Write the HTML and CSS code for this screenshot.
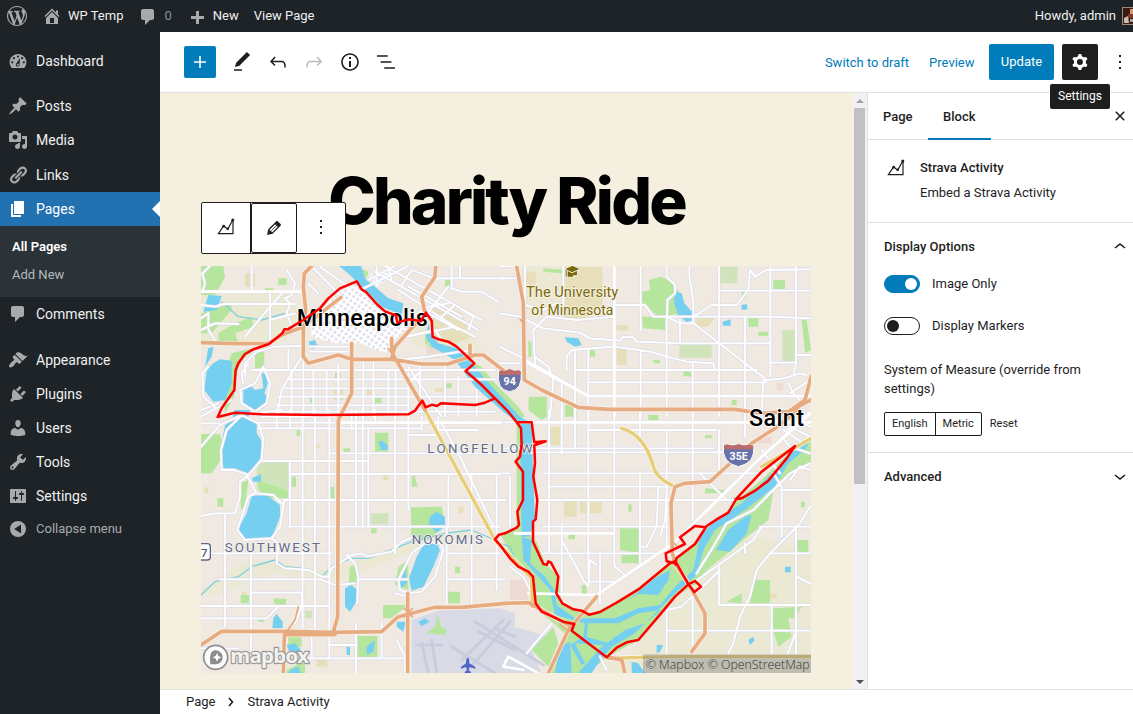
FILE: index.html
```html
<!DOCTYPE html>
<html lang="en">
<head>
<meta charset="utf-8">
<title>Edit Page</title>
<link rel="stylesheet" href="styles.css">
</head>
<body>
<header class="adminbar">
  <svg class="ab-logo" viewBox="0 0 20 20"><path d="M20 10c0-5.51-4.49-10-10-10C4.48 0 0 4.49 0 10c0 5.52 4.48 10 10 10 5.51 0 10-4.48 10-10zM7.78 15.37L4.37 6.22c.55-.02 1.17-.08 1.17-.08.5-.06.44-1.13-.06-1.11 0 0-1.45.11-2.37.11-.18 0-.37 0-.58-.01C4.12 2.69 6.87 1.11 10 1.11c2.33 0 4.45.87 6.05 2.34-.68-.11-1.65.39-1.65 1.58 0 .74.45 1.36.9 2.1.35.61.55 1.36.55 2.46 0 1.49-1.4 5-1.4 5l-3.03-8.37c.54-.02.82-.17.82-.17.5-.05.44-1.25-.06-1.22 0 0-1.44.12-2.38.12-.87 0-2.33-.12-2.33-.12-.5-.03-.56 1.2-.06 1.22l.92.08 1.26 3.41zM17.41 10c.24-.64.74-1.87.43-4.25.7 1.29 1.05 2.71 1.05 4.25 0 3.29-1.73 6.24-4.4 7.78.97-2.59 1.94-5.2 2.92-7.78zM6.1 18.09C3.12 16.65 1.11 13.53 1.11 10c0-1.3.23-2.48.72-3.59C3.25 10.3 4.67 14.2 6.1 18.09zm4.03-6.63l2.58 6.98c-.86.29-1.76.45-2.71.45-.79 0-1.57-.11-2.29-.33.81-2.38 1.62-4.74 2.42-7.1z"/></svg>
  <span class="ab-item ab-site"><svg viewBox="0 0 20 20"><path fill-rule="evenodd" d="M16 8.5l1.53 1.53-1.06 1.06L10 4.6l-6.47 6.47-1.06-1.06L10 2.500l4 4v-2h2v4zm-6-2.460l6 5.990V18H4v-5.970zM12 17v-5H8v5h4z"/></svg>WP Temp</span>
  <span class="ab-item ab-comments"><svg viewBox="0 0 20 20"><path d="M5 2h9c1.100 0 2 .9 2 2v7c0 1.100-.9 2-2 2h-2l-5 5v-5H5c-1.100 0-2-.9-2-2V4c0-1.100.9-2 2-2z"/></svg><i>0</i></span>
  <span class="ab-item ab-new"><svg viewBox="0 0 20 20"><path d="M17 9v3h-5v5H9v-5H4V9h5V4h3v5z"/></svg>New</span>
  <span class="ab-item">View Page</span>
  <span class="ab-user">Howdy, admin</span>
  <svg class="avatar" viewBox="0 0 18 18"><rect width="18" height="18" fill="#9a8c80"/><rect x="1" y="1" width="16" height="16" fill="#3a1a12"/><path d="M8 2h4v5H8z" fill="#d69a75"/><path d="M6 7h5v4H6z" fill="#7c3c28"/><path d="M2 11l4-2 1 7H2z" fill="#c9beb4"/><path d="M8 12h5v3H8z" fill="#a9a09b"/></svg>
</header>

<div class="shell">
  <nav class="menu">
    <a class="item"><svg viewBox="0 0 20 20"><path d="M3.760 17h12.480c1.340-1.530 2.170-3.520 2.170-5.720C18.410 6.600 14.650 3 10 3s-8.410 3.600-8.410 8.280c0 2.200.83 4.190 2.170 5.720z"/><g class="hole"><circle cx="10" cy="5.500" r="1.100"/><circle cx="5.900" cy="7.200" r="1.100"/><circle cx="14.100" cy="7.200" r="1.100"/><circle cx="4.200" cy="11.300" r="1.100"/><circle cx="15.800" cy="11.300" r="1.100"/><path d="M12 7l-.5 6.500c0 2.800-3.700 2.800-3.700.2 0-1 .6-1.500 1-2z"/></g><circle cx="9.800" cy="13.700" r="1"/></svg>Dashboard</a>
    <div class="sep"></div>
    <a class="item"><svg viewBox="0 0 20 20"><path d="M10.440 3.020l1.820-1.820 6.360 6.350-1.830 1.820c-1.050-.68-2.480-.57-3.410.36l-.75.75c-.92.93-1.040 2.350-.35 3.410l-1.830 1.820-2.410-2.410-2.800 2.790c-.42.42-3.380 2.710-3.800 2.290s1.860-3.390 2.280-3.810l2.790-2.790L4.100 9.360l1.830-1.820c1.050.69 2.480.57 3.400-.36l.75-.75c.93-.92 1.050-2.350.36-3.410z"/></svg>Posts</a>
    <a class="item"><svg viewBox="0 0 20 20"><path fill-rule="evenodd" d="M13 11V4c0-.55-.45-1-1-1h-1.670L9 1H5L3.670 3H2c-.55 0-1 .45-1 1v7c0 .55.45 1 1 1h10c.55 0 1-.45 1-1zM7 4.500c1.380 0 2.500 1.120 2.500 2.500S8.380 9.500 7 9.500 4.500 8.380 4.500 7 5.620 4.500 7 4.500zM14 6h5v10.500c0 1.380-1.120 2.500-2.500 2.500S14 17.880 14 16.500s1.120-2.500 2.500-2.500c.17 0 .34.02.5.05V9h-3V6zm-4 8.050V13h2v3.500c0 1.380-1.120 2.500-2.500 2.500S7 17.880 7 16.500 8.120 14 9.500 14c.17 0 .34.02.5.05z"/></svg>Media</a>
    <a class="item"><svg viewBox="0 0 20 20"><path d="M17.740 2.760c1.680 1.690 1.680 4.410 0 6.100l-1.530 1.520c-1.120 1.120-2.700 1.470-4.140 1.090l2.620-2.610.76-.77.76-.76c.84-.84.84-2.200 0-3.040-.84-.85-2.200-.85-3.040 0l-.77.76-3.380 3.380c-.37-1.440-.02-3.020 1.100-4.140l1.520-1.530c1.690-1.680 4.420-1.680 6.100 0zM8.590 13.430l5.340-5.340c.42-.42.42-1.100 0-1.520-.44-.43-1.130-.39-1.530 0l-5.330 5.340c-.42.42-.42 1.100 0 1.520.44.43 1.130.39 1.520 0zm-.76 2.290l4.140-4.150c.38 1.440.03 3.020-1.090 4.140l-1.520 1.530c-1.690 1.680-4.410 1.680-6.100 0-1.680-1.680-1.680-4.420 0-6.100l1.530-1.520c1.120-1.120 2.700-1.470 4.140-1.100l-4.140 4.150c-.85.84-.85 2.200 0 3.050.84.84 2.200.84 3.040 0z"/></svg>Links</a>
    <a class="item current"><svg viewBox="0 0 20 20"><path d="M6 15V2h10v13H6zm-1 1h8v2H3V5h2v11z"/></svg>Pages</a>
    <div class="submenu"><a class="on">All Pages</a><a>Add New</a></div>
    <a class="item"><svg viewBox="0 0 20 20"><path d="M5 2h9c1.100 0 2 .9 2 2v7c0 1.100-.9 2-2 2h-2l-5 5v-5H5c-1.100 0-2-.9-2-2V4c0-1.100.9-2 2-2z"/></svg>Comments</a>
    <div class="sep wide"></div>
    <a class="item"><svg viewBox="0 0 20 20"><path d="M14.480 11.060L7.410 3.990l1.500-1.500c.5-.56 2.300-.47 3.510.32 1.210.8 1.430 1.280 2.910 2.100 1.180.64 2.450 1.260 4.450.85zm-.71.71L6.700 4.700 4.930 6.470c-.39.39-.39 1.020 0 1.410l1.060 1.060c.39.39.39 1.030 0 1.420-.6.6-1.430 1.110-2.210 1.690-.35.26-.7.53-1.010.84C1.430 14.230.4 16.080 1.400 17.070c.99 1 2.840-.03 4.180-1.360.31-.31.58-.66.85-1.020.57-.78 1.080-1.610 1.690-2.210.39-.39 1.020-.39 1.410 0l1.060 1.060c.39.39 1.020.39 1.410 0z"/></svg>Appearance</a>
    <a class="item"><svg viewBox="0 0 20 20"><path d="M13.110 4.360L9.870 7.600 8 5.730l3.240-3.240c.35-.34 1.050-.2 1.560.32.52.51.66 1.210.31 1.550zm-8 1.770l.91-1.120 9.010 9.010-1.190.84c-.71.71-2.630 1.160-3.820 1.160H6.140L4.900 17.260c-.59.59-1.540.59-2.120 0-.59-.58-.59-1.530 0-2.120l1.240-1.240v-3.880c0-1.130.4-3.190 1.090-3.890zm7.260 3.970l3.240-3.240c.34-.35 1.040-.21 1.550.31.52.51.66 1.210.31 1.550l-3.240 3.250z"/></svg>Plugins</a>
    <a class="item"><svg viewBox="0 0 20 20"><path d="M10 9.250c-2.270 0-2.730-3.440-2.730-3.440C7 4.020 7.820 2 9.970 2c2.160 0 2.980 2.020 2.710 3.810 0 0-.41 3.440-2.680 3.440zm0 2.570L12.720 10c2.390 0 4.520 2.330 4.520 4.530v2.490s-3.650 1.130-7.240 1.130c-3.650 0-7.240-1.130-7.240-1.130v-2.490c0-2.250 1.940-4.480 4.470-4.480z"/></svg>Users</a>
    <a class="item"><svg viewBox="0 0 20 20"><path fill-rule="evenodd" d="M16.680 9.770c-1.340 1.340-3.300 1.670-4.950.99l-5.410 6.520c-.99.99-2.590.99-3.580 0s-.99-2.590 0-3.570l6.520-5.420c-.68-1.650-.35-3.610.99-4.950 1.280-1.280 3.120-1.620 4.720-1.060l-2.890 2.890 2.820 2.820 2.860-2.870c.53 1.580.18 3.390-1.080 4.650zM3.810 16.210c.4.39 1.040.39 1.430 0 .4-.4.4-1.040 0-1.430-.39-.4-1.030-.4-1.430 0-.39.39-.39 1.030 0 1.430z"/></svg>Tools</a>
    <a class="item"><svg viewBox="0 0 20 20"><path fill-rule="evenodd" d="M18 16V4c0-.55-.45-1-1-1H3c-.55 0-1 .45-1 1v12c0 .55.45 1 1 1h14c.55 0 1-.45 1-1zM8 11h1c.55 0 1 .45 1 1s-.45 1-1 1H8v1.500c0 .28-.22.5-.5.5s-.5-.22-.5-.5V13H6c-.55 0-1-.45-1-1s.45-1 1-1h1V5.500c0-.28.22-.5.5-.5s.5.22.5.5V11zm5-2h-1c-.55 0-1-.45-1-1s.45-1 1-1h1V5.500c0-.28.22-.5.5-.5s.5.22.5.5V7h1c.55 0 1 .45 1 1s-.45 1-1 1h-1v5.500c0 .28-.22.5-.5.5s-.5-.22-.5-.5V9z"/></svg>Settings</a>
    <a class="item collapse"><svg viewBox="0 0 20 20"><circle cx="10" cy="10" r="8"/><path class="hole" d="M13 5.500v9L6.200 10z"/></svg>Collapse menu</a>
  </nav>

  <div class="editor">
    <div class="topbar">
      <button class="add"><svg viewBox="0 0 24 24"><path d="M18 11.200h-5.200V6h-1.600v5.200H6v1.600h5.200V18h1.600v-5.200H18z"/></svg></button>
      <svg class="tool" viewBox="0 0 24 24"><path d="M20.100 5.100L16.900 2 6.200 12.700l-1.300 4.400 4.500-1.300L20.100 5.100zM4 20.800h8v-1.500H4v1.500z"/></svg>
      <svg class="tool" viewBox="0 0 24 24"><path d="M18.300 11.700c-.6-.6-1.400-.9-2.300-.9H6.700l2.900-3.300-1.100-1-4.500 5L8.500 16l1-1-2.700-2.700H16c.5 0 .9.2 1.300.5 1 1 1 3.400 1 4.500v.3h1.500v-.2c0-1.500 0-4.300-1.500-5.700z"/></svg>
      <svg class="tool off" viewBox="0 0 24 24"><path d="M15.600 6.500l-1.100 1 2.900 3.300H8c-.9 0-1.700.3-2.300.9-1.400 1.500-1.400 4.200-1.400 5.600v.2h1.500v-.3c0-1.100 0-3.500 1-4.500.3-.3.7-.5 1.300-.5h9.200L14.500 15l1.100 1.100 4.600-4.600-4.600-5z"/></svg>
      <svg class="tool" viewBox="0 0 24 24"><path fill-rule="evenodd" d="M12 3.200c-4.800 0-8.800 3.900-8.800 8.800 0 4.800 3.900 8.800 8.800 8.800 4.800 0 8.800-3.900 8.800-8.800 0-4.800-4-8.800-8.800-8.800zm0 16c-4 0-7.200-3.300-7.200-7.200C4.800 8 8 4.800 12 4.800s7.200 3.300 7.200 7.200c0 4-3.200 7.200-7.200 7.200zM11 17h2v-6h-2v6zm0-8h2V7h-2v2z"/></svg>
      <svg class="tool" viewBox="0 0 24 24"><path d="M13.800 5.200H3v1.500h10.800V5.200zm-3.600 12v1.500H21v-1.500H10.200zm7.200-6H6.600v1.500h10.800v-1.500z"/></svg>
      <div class="actions">
        <a>Switch to draft</a><a>Preview</a>
        <button class="update">Update</button>
        <button class="gear"><svg viewBox="0 0 24 24"><path fill-rule="evenodd" d="M10.289 4.836A1 1 0 0111.275 4h1.306a1 1 0 01.987.836l.244 1.466c.787.26 1.503.679 2.108 1.218l1.393-.522a1 1 0 011.216.437l.653 1.130a1 1 0 01-.23 1.273l-1.148.944a6.025 6.025 0 010 2.435l1.149.946a1 1 0 01.23 1.272l-.653 1.130a1 1 0 01-1.216.437l-1.394-.522c-.605.54-1.320.958-2.108 1.218l-.244 1.466a1 1 0 01-.987.836h-1.306a1 1 0 01-.986-.836l-.244-1.466a5.995 5.995 0 01-2.108-1.218l-1.394.522a1 1 0 01-1.217-.436l-.653-1.131a1 1 0 01.23-1.272l1.149-.946a6.026 6.026 0 010-2.435l-1.148-.944a1 1 0 01-.23-1.272l.653-1.131a1 1 0 011.217-.437l1.393.522a5.994 5.994 0 012.108-1.218l.244-1.466zM14.929 12a3 3 0 11-6 0 3 3 0 016 0z"/></svg><span class="tip">Settings</span></button>
        <svg class="more" viewBox="0 0 24 24"><path d="M13 19h-2v-2h2v2zm0-6h-2v-2h2v2zm0-6h-2V5h2v2z"/></svg>
      </div>
    </div>

    <div class="middle">
      <main class="canvas">
        <h1>Charity Ride</h1>
        <div class="blocktools">
          <span class="bt first"><svg class="strava" viewBox="0 0 20 20"><path d="M17 1.500V15.700H2.400L7.600 7.800L11.700 11.200L17 1.500"/><circle cx="16.800" cy="2" r="1.500"/><circle cx="7.700" cy="8.200" r="1.400"/><circle cx="11.700" cy="10.700" r="1.200"/></svg></span>
          <span class="bt active"><svg viewBox="0 0 20 20"><path fill-rule="evenodd" d="M13.890 3.390l2.710 2.720c.46.46.42 1.240.03 1.640l-8.010 8.020-5.560 1.160 1.160-5.580s7.600-7.630 7.990-8.030c.39-.39 1.220-.39 1.680.07zm-2.730 2.790l-5.590 5.610 1.110 1.110 5.540-5.650zm-2.970 8.230l5.580-5.600-1.070-1.080-5.590 5.600z"/></svg></span>
          <span class="bt last"><svg viewBox="0 0 24 24"><path d="M13 19h-2v-2h2v2zm0-6h-2v-2h2v2zm0-6h-2V5h2v2z"/></svg></span>
        </div>
        <svg class="map" viewBox="18 288 1830 1221">
          <defs>
            <pattern id="blocks" width="15" height="15" patternUnits="userSpaceOnUse" patternTransform="rotate(35)"><rect width="15" height="15" fill="#fff"/><rect x="4" y="4" width="8" height="8" fill="#dcdde8"/></pattern>
            <g id="streets">
              <g>
                <path d="M18 365H320M18 405L60 410L85 402H300M170 288V365M265 365L200 440L150 500M275 300L300 340L290 375L270 385L285 400L275 430L290 470M795 288V325M720 325H930M770 288V355L800 365H860L910 395M18 480L60 460L130 462M40 590L22 610L25 680L60 712M45 288L22 310L30 340L22 365M18 445L40 430V480L60 510M225 370V520M225 450L300 430M150 620L150 580L185 545L240 530L320 528M145 640L140 610L160 580M205 590L225 640L215 700L180 725L140 700L135 660L180 640L205 590M280 540V600M320 560L290 610L260 660L245 740M170 600H320M345 530H460M345 545H460M18 720L70 700M18 740L110 690"/>
                <path d="M280 600H900M280 628H900M270 655H640M250 680H860M245 706H640M245 725H900M290 600V740M325 570V740M355 600V740M395 600V740M430 580V740M505 570V740M535 570V740M580 600V740M602 600V740M640 610V740M675 580V700M750 580V740M790 620V740M845 660V740M640 590L740 740M610 570L700 560L830 540M640 640L680 600"/>
                <path d="M350 290L440 380M375 290L460 350M340 340L370 370M500 358L640 288M540 305L850 480M570 288L860 450M600 470L700 410L760 400M640 500L780 470L840 500M520 330L600 288M545 330L545 290M580 288L590 330M820 480L835 440L780 405L740 440M690 440L760 350M730 330L650 300L620 345M640 350L800 440M610 360L780 470M790 480L700 430M740 510L720 480L630 500"/>
              </g>
              <g transform="translate(915)">
                <path d="M343 288V740M422 288V480M500 288V320L525 345V370L502 390V420L500 440V740M568 288V320L580 395V460M657 288V740M735 440V600M811 288V620M888 288V580L880 620M343 405H435L460 440H811L930 445M657 362H930M500 440L540 460H580L800 630M580 440L635 405H710L745 360L750 300L765 320L800 300L930 298M343 440L230 450L140 440L100 480L105 580M0 430L60 440L130 475L240 488L270 505L360 512L370 500L400 502L410 515L540 520H811M200 600V560L215 540L343 530L450 545L500 560L560 575L640 580L645 600M225 600H770M265 637H800M265 678H930M811 578H885M888 555H930M225 540V740M265 540V740M0 530L60 560L150 610L200 640L265 678M0 325L60 325M75 405L130 420L170 400M105 560L145 590L160 630L150 740M185 640V740M0 580H60M540 450V515M578 580V740M422 545V740M735 600V740M790 630L785 740M790 632L850 625L900 610L920 615M865 640L880 670L910 700M870 670L930 630M0 288L40 288M190 288V405M75 288V500"/>
              </g>
              <g transform="translate(0 720)">
                <path d="M18 40H75M190 38H420M190 55H680M200 20H420M440 38H915M205 153H520M405 130H915M285 192H915M265 270H930M280 350H860M20 430H410M760 430H915M75 508H380M490 508H640M755 508H930M168 548H320M18 588H400M18 625H215L250 590M400 705H480M330 745H640M18 715H130M350 655V745"/>
                <path d="M90 310V650M168 430V745M285 155V350M323 0V660M360 0V660M403 0V745M470 0V60M483 0V350M503 0V350M520 60V350M540 30V0M600 0V430M640 0V300M483 640V789M560 640V740M755 350V588M830 190V588M905 190V540M680 20V60M730 20V60M760 190V350M245 0V55M285 0V55"/>
                <path d="M18 110L75 45L140 15L190 40L205 85L200 150L160 195L115 180L80 180L78 120L95 60L140 15M155 195L185 250L235 255L265 285L255 350L230 385L150 390L127 360L160 260L180 250M155 200L135 215V260L120 310L60 310L18 318M265 285L270 270M230 385L250 400L245 460L270 475L340 480L380 500L400 500L410 475L470 435L500 430L515 440L590 425L620 395L660 380M260 0L170 10M455 435L480 460L490 500L487 580M380 510L420 525L480 520M740 40L800 150L895 350M720 60L850 60M640 75H730M690 400L650 430L610 510L615 540L640 550L680 545L720 500L745 420L735 400L700 395M320 550V590L300 640M600 550L640 560M605 690L630 740V789M860 350H915M18 700L60 680"/>
              </g>
              <g transform="translate(915 720)">
                <path d="M0 37H930M0 115H640M95 127H720M130 190H780M145 230H500M110 270H710M130 350H500M780 350H930M125 430H470M500 430H540M810 430H930M265 515H345M657 585H930M500 662H930M600 190H760M268 60H650M850 240H930M45 370H340"/>
                <path d="M147 0V430M185 0V130M225 0V115M265 0V500M343 0V470M420 0V105M420 190V460M500 60V430M578 0V330M657 60V200M657 470V580M735 0V80M735 400V430M500 600V740M578 540V740M815 585V740M888 350V740M30 200V350M0 190H30M475 230L470 350L440 410H420M500 240L495 330L480 380M185 390L250 510L265 530L270 450L290 465M300 430V580M345 470L380 500M185 340V545"/>
                <path d="M290 555L520 400L650 270L750 175L850 80L930 5M585 515L690 440L760 390L785 350M500 600L545 590L660 480M590 490L640 410L680 340L760 300L820 240L870 190L930 160M820 190L845 230V380M785 120L840 190M845 80L870 110L930 130M680 740L700 700L720 620L750 560L770 480L810 430L900 340L930 290M890 660L860 740M890 500L930 520M80 730L155 640M100 560L70 500L30 470M600 190L680 270M850 60L910 100M830 30L930 80M870 20L930 50M840 40L900 0M860 60L930 10M870 210L900 170L930 180M300 740L320 780"/>
              </g>
            </g>
            <g id="highways">
              <path d="M18 518L120 521L222 520L260 495L325 470L438 382M350 288L328 310L325 350L332 420L325 480V560L340 580L430 555L470 568H590L680 582H760L840 555L865 555L930 605M470 520V670L430 750L428 1340L415 1385M590 565L600 530L690 430L680 380L720 320L722 288M598 560L655 660L690 720M590 545V505M825 555V525M18 1425L80 1384H280L410 1387L560 1385L610 1340L720 1312L800 1312L930 1300L1000 1298L1040 1320L1120 1365M265 1510L268 1400M268 1394H420M638 1270V1510"/>
              <path d="M965 288L985 400L988 630L1040 660L1150 712L1240 718H1620L1700 730L1780 725L1830 690L1848 620M1740 775L1670 820L1600 885L1545 935L1470 940L1440 950L1428 1000L1432 1150L1440 1180L1480 1240L1530 1330L1530 1390L1490 1445M1205 1280L1120 1380L1060 1510M1240 1462L1280 1470L1290 1510M1810 720L1740 775M1780 725L1848 690"/>
            </g>
            <g id="arterials"><path d="M690 720L900 1110L1010 1225L1012 1310M1280 775Q1350 795 1375 890Q1385 925 1430 945M1700 890L1848 805M1240 1465L1420 1460H1848"/></g>
          </defs>
          <rect class="land" x="18" y="288" width="1830" height="1221"/>
          <path class="pale" d="M18 288H80V365H18zM18 365H270L330 460L250 520H18zM700 405L820 470L860 540L760 560L650 520L640 460zM1400 1200L1550 1130L1700 1100L1848 1150V1509H1250L1400 1340zM980 288H1110V420H980zM1000 700L1060 680V740zM18 1260L160 1170L400 1200L600 1130L800 1080L860 1090L640 1150L400 1240L240 1210L50 1280z"/>
          <path class="sand" d="M1105 290H1222V405L1165 450H1105zM990 305H1022V345H990zM700 410L740 400L800 430L830 500L770 525L720 500zM150 310H180V350H150zM1065 770H1095V825H1065zM1107 990H1145V1040H1107zM1155 995H1220V1030H1155zM1265 535H1295V585H1265zM1500 445H1560L1540 470H1505zM1265 465H1300V482H1265zM415 650H445V690H415zM515 658H540V675H515zM355 825H375V833H355zM565 915H580V930H565zM790 1010H805V1030H790zM365 1470H397V1490H365zM720 655H745V665H720zM28 952H40V970H28zM140 1265H155V1280H140zM1640 1020H1660V1040H1640zM1725 1270H1745V1285H1725z"/>
          <path class="pink" d="M945 1230H1000V1290H945zM1745 640H1765V660H1745zM1690 800H1730V820H1690zM690 530H735V565H700z"/>
          <path class="olive" d="M185 875H280V960H185zM527 1030H580V1063H527zM1453 525H1550V563H1453zM1762 480H1800V575H1762zM1575 290H1630L1625 340H1575zM330 1322H352V1345H330zM660 1070H690V1085H660z"/>
          <path class="park" d="M18 288H85L90 320L60 375H18zM18 430L75 412L110 395V420L50 490H18zM70 490L110 465L170 440L175 470L120 490L130 520H70zM110 550L190 530L140 570L120 620L118 680L90 730L80 640zM250 325H275V345H250zM180 545H208V595H180zM210 355H235V370H210zM18 792H75L90 850L50 910H18zM540 788H580V845H540zM185 930L280 962V985H200zM135 940L160 930L150 1010L138 1020zM648 1012L740 1010L750 1065L700 1110H648zM465 1190L485 1185V1235L460 1250zM487 1398H547V1465H487zM564 1305H640L590 1345H564zM758 1265H795V1300H758zM780 1190H795V1210H780zM445 835H465V845H445zM305 780H315V798H305zM528 1075H545V1090H528zM650 920L658 915L668 950H650zM290 920H303V950H290zM405 950H418V985H405zM137 1275H162V1300H137zM235 1285L275 1287L270 1310L240 1308zM67 985H85V1010H67zM190 1340H207V1355H190zM280 1380H320V1430H280zM275 1500L330 1470V1510H275zM610 1190L640 1170V1260L600 1245zM820 570L860 590L900 640L970 710L990 740L960 745L900 680L830 605zM690 480L715 500L700 520L720 545L690 520zM345 683H360V700H345zM540 683H560V700H540zM420 610H437V630H420zM750 330H765V350H750zM490 292L520 305L515 325L490 310zM750 640H770V655H750z"/>
          <path class="park" d="M1045 295L1110 300L1100 310L1045 305zM1340 365L1365 360L1362 330L1400 320L1440 345L1435 435H1385L1340 395zM1340 440H1410V480L1345 475zM1415 375L1450 360L1470 440L1430 430zM1640 362H1652V382H1640zM1735 330H1770V357H1735zM1820 450H1835L1848 540L1830 550zM1660 445H1690V470H1660zM1690 485H1720V497H1690zM1465 600L1490 605V620L1465 618zM1185 540H1200V560H1185zM1000 510L1010 520V560H1000zM1002 680H1055V740L1040 750L1000 720zM1360 735H1390V750H1360zM1110 705H1135V740H1110zM965 757H985V1120H965zM1375 570H1395V580H1375zM1610 690H1625V705H1610z"/>
          <path class="park" d="M915 1090L975 1070L1025 1115L1050 1180L1090 1220L1100 1300L1182 1334L1270 1295L1430 1180L1440 1170L1500 1120L1580 1040L1625 990L1700 930L1780 850L1848 800V880L1740 940L1660 1020L1600 1110L1500 1245L1440 1280L1330 1410L1235 1462L1180 1509H1060L1120 1400L1020 1310L1014 1210L960 1180zM1275 1075H1335V1150L1275 1140zM1280 1150H1335V1180H1280zM1735 965L1720 1050L1560 1180L1510 1220L1540 1150L1650 1000zM1675 1230H1725V1300H1665zM1595 1295L1640 1270V1300zM1735 1315L1820 1310L1800 1345H1780L1790 1400L1750 1430L1730 1370zM1805 1110H1840V1150H1805zM1300 1000L1310 1005V1025L1300 1025zM1530 955L1590 960V970H1530zM1615 982H1625V1012H1615zM1818 995H1830V1012H1818zM1160 1245H1175V1275H1160zM1530 795H1550V805H1530zM1120 1095H1140V1108H1120z"/>
          <path class="pale" d="M1220 1470L1280 1480L1280 1509H1210z"/>
          <path class="tarmac" d="M650 1350L730 1322L915 1315L960 1330L960 1370L1060 1400L1010 1440L1040 1509H650z"/>
          <path class="park" d="M728 1335L738 1370L755 1378L750 1395L695 1390L720 1370zM1010 1440L1075 1370L1090 1420L1060 1490z"/>
          <path class="taxi" d="M840 1355L1045 1485M850 1385L960 1440M680 1420L700 1509M710 1410L725 1509M665 1425H740M770 1430L900 1509M945 1355L820 1500M925 1350L800 1470M900 1375L960 1400"/>
          <path class="runway" d="M985 1500L925 1490L940 1460L1040 1515"/>
          <g class="water">
            <path d="M40 375L80 378L65 420L25 425zM55 580L75 568L110 572L110 640L90 690L55 695L28 660L35 600zM40 535L55 530L50 560L30 590zM145 650L165 645L180 660L205 655L200 610L215 610L218 640L208 670L220 685L205 715L175 720L145 700zM340 515L360 510L368 530L350 538zM432 288H498L510 325L545 355L580 385L625 400L620 435L560 410L500 350L465 315zM700 460L712 500L730 520L785 535L830 580L900 660L975 740L1010 760L1014 900L1020 1040L1005 1100H980L975 760L930 730L840 650L780 570L710 530L692 500zM110 750L160 742L165 720H120z"/>
            <path d="M125 745L150 740L185 760V790L198 810L200 860L160 910L120 895L85 895L80 820L90 765zM170 978L215 975L255 1005L255 1040L230 1105L185 1110L150 1110L128 1080L155 1030zM170 925L198 912V935H175zM550 815L560 812L578 825V840H558zM705 1040L725 1025L750 1040V1070L725 1088L702 1065zM685 1125L725 1120L735 1140L715 1190L685 1250L650 1262L642 1225L665 1160zM612 1240L632 1195L635 1240L620 1255zM450 1255L470 1245L487 1260V1290L465 1325L450 1310zM235 1345L245 1332L263 1355V1375H232zM275 1425L300 1420L318 1440L310 1455L280 1440zM285 1500L310 1490L318 1509H280zM515 1430L540 1410L535 1445L515 1455zM455 1430H465V1455H455zM670 1355L690 1345L705 1355L680 1368zM605 1355L632 1355L625 1385L605 1370z"/>
            <path d="M1440 365L1460 370L1468 400L1495 430V450L1475 457L1450 435L1437 400zM1110 502L1150 505L1160 525L1140 530L1115 515zM1583 455L1607 448V467H1583zM1640 405L1655 402L1658 418L1640 420zM980 1100L1010 1110L1005 1180L1050 1220L1078 1260L1085 1305L1140 1345L1260 1345L1330 1315L1395 1305L1440 1250L1495 1200L1515 1100L1560 1050L1640 1000L1700 940L1760 880L1800 825L1848 805L1830 840L1780 880L1740 950L1650 1020L1560 1080L1530 1130L1500 1220L1450 1260L1380 1330L1320 1390L1250 1430L1210 1480L1190 1509H1150L1220 1430L1290 1380L1350 1360L1400 1320L1330 1330L1270 1360H1170L1080 1335L1065 1260L1030 1220L985 1170zM1300 1290L1380 1225L1425 1200L1420 1230L1390 1275L1330 1272zM1563 1140L1600 1080L1650 1040L1670 1035L1655 1090L1605 1145zM1095 1430L1125 1415L1130 1509H1080zM1170 1355H1180L1175 1400L1240 1420L1220 1425L1140 1420L1170 1480L1160 1485L1125 1425L1165 1400zM1310 1475L1330 1480L1350 1509H1310zM1385 1425L1405 1425L1395 1445L1385 1450zM1660 1410L1675 1400L1678 1412L1665 1425zM1770 1190H1787V1207H1770z"/>
            <path class="creek" d="M18 1275L60 1235L130 1220L170 1190L240 1170L270 1190L330 1195L380 1220L410 1190L470 1165L520 1165L600 1135L650 1115L750 1090L830 1080L900 1110M80 395L130 440L200 450L270 430M915 1120L945 1130L970 1190"/>
          </g>
          <path fill="url(#blocks)" d="M375 420L440 360L485 345L510 375L570 430L610 445L640 470L600 510L590 550L540 540L500 520L420 520L350 500L345 460zM520 320L580 295L600 310L545 350z"/>
          <use href="#streets" class="street-case"/>
          <use href="#streets" class="street"/>
          <path class="avenue" d="M965 757H1848M1258 288V740M1180 678H1848M1180 678L1000 580M960 1090H1255M1000 1270L1205 1275L1435 1120L1700 860L1848 730M440 758H915M18 365H320"/>
          <use href="#arterials" class="road-case"/>
          <use href="#highways" class="road-case"/>
          <use href="#arterials" class="arterial"/>
          <use href="#highways" class="highway"/>
          <g class="ramps"><path d="M268 1394L300 1350L310 1310M628 1316L652 1340M652 1316L628 1340M578 535L598 555M975 448L988 462M1095 1362L1115 1380M1430 1112L1445 1128"/></g>

          <g class="city">
            <text x="305" y="467" textLength="393">Minneapolis</text>
            <text x="1662" y="767" textLength="165">Saint</text>
          </g>
          <g class="campus">
            <path d="M1111 297L1131 288H1133L1153 297L1131 307zM1118 303L1131 310L1146 303V316H1134V320H1118zM1112 300H1115V320H1112z"/>
            <text x="993" y="380" textLength="277" lengthAdjust="spacingAndGlyphs">The University</text>
            <text x="1009" y="434" textLength="246" lengthAdjust="spacingAndGlyphs">of Minnesota</text>
          </g>
          <g class="hood">
            <text x="697" y="849" textLength="316">LONGFELLOW</text>
            <text x="650" y="1123" textLength="214">NOKOMIS</text>
            <text x="89" y="1146" textLength="286">SOUTHWEST</text>
          </g>
          <path class="route" d="M68 741L80 715L118 660L122 600L130 580L150 552L175 538L222 522L262 490L268 478H278L325 450L375 415L400 385L435 355L485 334L500 358L513 366L545 402L570 424L603 436L607 458L640 448L678 453L693 428L710 452L713 500L730 508L760 515L785 530L838 580L812 603L860 645L900 685L940 725L965 757H1010L1018 817L1052 814L1018 826L1020 880L1015 920L1027 990L1022 1048L1014 1055V1115L1045 1182L1056 1184L1060 1174L1068 1178L1090 1220L1084 1270L1102 1300L1135 1318L1160 1322L1182 1334L1215 1326L1270 1295L1335 1255L1425 1180L1438 1174L1442 1184L1444 1165L1500 1122L1535 1068L1570 1045L1600 1028L1615 1002L1625 985L1700 905L1800 828L1775 865L1720 932L1680 962L1640 985L1622 988M1532 1072L1500 1068L1455 1102L1470 1122L1412 1150L1415 1174L1440 1180L1442 1175L1480 1243L1500 1233L1518 1250L1498 1266L1480 1243L1440 1280L1390 1340L1330 1410L1295 1417L1265 1433L1235 1462L1130 1382L1138 1362L1105 1355L1040 1325L1022 1300L1014 1220L1000 1205L970 1190L945 1165L915 1125L900 1108L912 1094L930 1090L965 1073L972 1065L967 1025L984 990V905L962 875L975 860L980 820L978 775L965 757M900 685L870 698L840 705L738 700L725 708L712 704L692 712L682 692L672 705L660 722L640 733L380 735L200 733L120 728L68 741"/>
          <g class="shield">
            <path class="blue" d="M911 602H978Q985 660 944 665Q902 660 911 602zM1586 825H1675Q1685 878 1630 890Q1577 878 1586 825z"/>
            <path class="red" d="M913 615V604L920 600Q930 606 944 597Q960 606 970 600L977 604V615zM1587 838V826L1595 823Q1615 830 1631 822Q1647 830 1665 823L1675 827V838z"/>
            <text x="944" y="645">94</text><text x="1631" y="871">35E</text>
          </g>
          <g class="hwy7"><rect x="-20" y="1121" width="66" height="49" rx="9"/><text x="18" y="1160">7</text></g>
          <path class="plane" d="M818 1463Q823 1463 823 1480L841 1491V1496L823 1491L821 1501L828 1506V1509H809V1506L816 1501L813 1491L798 1496V1491L813 1480Q813 1463 818 1463z"/>
          <g class="logo">
            <circle class="ring" cx="62" cy="1462" r="36"/>
            <path class="mark" d="M46 1483Q41 1440 62 1441A20 20 0 1 1 62 1483Z"/>
            <path class="star" d="M66 1449L70 1458L79 1462L70 1466L66 1475L62 1466L53 1462L62 1458z"/>
            <text x="106" y="1479" textLength="236">mapbox</text>
          </g>
          <g class="credit"><rect x="1344" y="1453" width="504" height="56"/><text x="1352" y="1498" textLength="492">© Mapbox © OpenStreetMap</text></g>
        </svg>
      </main>
      <div class="scroll"><i class="up"></i><b></b><i class="down"></i></div>
      <aside class="panel">
        <div class="tabs"><span>Page</span><span class="on">Block</span><svg viewBox="0 0 24 24"><path d="M12 13.060l3.712 3.713 1.061-1.060L13.061 12l3.712-3.712-1.060-1.060L12 10.938 8.288 7.227l-1.061 1.060L10.939 12l-3.712 3.712 1.060 1.061L12 13.061z"/></svg></div>
        <div class="card">
          <svg class="strava" viewBox="0 0 20 20"><path d="M17 1.500V15.700H2.400L7.600 7.800L11.700 11.200L17 1.500"/><circle cx="16.800" cy="2" r="1.500"/><circle cx="7.700" cy="8.200" r="1.400"/><circle cx="11.700" cy="10.700" r="1.200"/></svg>
          <div><strong>Strava Activity</strong><p>Embed a Strava Activity</p></div>
        </div>
        <section class="options">
          <h2>Display Options<svg viewBox="0 0 24 24"><path d="M6.500 12.400L12 8l5.500 4.400-.9 1.200L12 10l-4.500 3.600-1-1.200z"/></svg></h2>
          <label><i class="toggle yes"></i>Image Only</label>
          <label class="second"><i class="toggle"></i>Display Markers</label>
          <p>System of Measure (override from settings)</p>
          <div class="units"><button>English</button><button>Metric</button><span>Reset</span></div>
        </section>
        <section class="advanced"><h2>Advanced<svg viewBox="0 0 24 24"><path d="M17.500 11.600L12 16l-5.500-4.400.9-1.200L12 14l4.500-3.600 1 1.200z"/></svg></h2></section>
      </aside>
    </div>
    <footer class="crumbs"><span>Page</span><svg viewBox="0 0 8 10"><path d="M2 1l3.500 4L2 9"/></svg><span>Strava Activity</span></footer>
  </div>
</div>
</body>
</html>
```

FILE: styles.css
```css
* { box-sizing: border-box; }
body {
  margin: 0;
  width: 1133px;
  height: 714px;
  overflow: hidden;
  background: #fff;
  color: #1e1e1e;
  font: 13px/1.4 Roboto, "Liberation Sans", sans-serif;
}
svg { display: block; flex: none; fill: currentColor; }
button { border: 0; padding: 0; font: inherit; color: inherit; background: none; }

/* admin bar */
.adminbar {
  display: flex;
  align-items: center;
  height: 32px;
  padding-left: 7px;
  background: #1d2327;
  color: #f0f0f1;
  overflow: hidden;
}
.adminbar svg { color: #a7aaad; }
.ab-logo { width: 20px; height: 20px; margin-right: 15px; }
.ab-item { display: flex; align-items: center; }
.ab-item svg { width: 20px; height: 20px; margin-right: 6px; }
.ab-item i { font-style: normal; color: #8c9196; }
.ab-site { margin-right: 15px; }
.ab-comments { margin-right: 15px; }
.ab-comments svg { margin-right: 6px; margin-top: 1px; }
.ab-new { margin-right: 15px; }
.ab-new svg { margin-right: 6px; margin-top: 1px; }
.ab-user { margin-left: auto; margin-right: 6px; }
.avatar { width: 18px; height: 18px; margin-right: -7px; }

/* side menu */
.shell { display: flex; height: 682px; }
.menu { width: 160px; padding-top: 12px; background: #1d2327; color: #f0f0f1; }
.item {
  position: relative;
  display: flex;
  align-items: center;
  height: 34.2px;
  padding: 1.6px 0 0 8px;
  font-size: 14px;
}
.item svg { width: 20px; height: 20px; margin: -1.6px 8px 0 0; color: #a7aaad; }
.item .hole { fill: #1d2327; }
.sep { height: 11px; }
.wide { height: 11.4px; }
.current { background: #2271b1; color: #fff; }
.current svg { color: #fff; }
.current::after {
  content: "";
  position: absolute;
  right: 0;
  top: 9px;
  border: 8px solid transparent;
  border-left: 0;
  border-right-color: #fff;
}
.submenu { height: 71px; padding: 7px 12px 0; background: #2c3338; }
.submenu a { display: block; height: 28px; line-height: 28px; color: #b4b9be; }
.submenu .on { color: #fff; font-weight: 600; }
.collapse { height: 33px; margin-top: -.5px; padding-top: 0; font-size: 13px; color: #a7aaad; }
.collapse svg { margin-top: 0; }

/* editor header */
.editor { width: 973px; display: flex; flex-direction: column; }
.topbar {
  display: flex;
  align-items: center;
  height: 61px;
  padding-left: 24px;
  border-bottom: 1px solid #e0e0e0;
}
.add {
  width: 32px;
  height: 32px;
  padding: 4px;
  margin-right: 14px;
  border-radius: 2px;
  background: #007cba;
  color: #fff;
}
.tool { width: 24px; height: 24px; margin-right: 12px; }
.off { color: #bbb; }
.actions { display: flex; align-items: center; margin-left: auto; color: #007cba; }
.actions a { margin-right: 20px; padding-top: 2px; }
.actions a + a { margin-right: 14.5px; }
.update { height: 36px; width: 65px; padding-top: 1px; border-radius: 2px; background: #007cba; color: #fff; }
.gear {
  position: relative;
  width: 36px;
  height: 36px;
  padding: 6px;
  margin-left: 8px;
  border-radius: 2px;
  background: #1e1e1e;
  color: #fff;
}
.tip {
  position: absolute;
  left: -12px;
  top: 40px;
  z-index: 3;
  width: 60px;
  height: 25px;
  line-height: 24px;
  font-size: 12px;
  border-radius: 2px;
  background: #1e1e1e;
}
.more { width: 24px; height: 24px; margin: 0 1px 0 10px; color: #1e1e1e; }

/* canvas */
.middle { display: flex; height: 596px; }
.canvas { position: relative; width: 693px; background: #f5efe0; overflow: hidden; }
h1 {
  margin: 69px 0 0 0;
  height: 78px;
  text-align: center;
  font: 800 64px/78px Inter, sans-serif;
  letter-spacing: -2.82px;
  color: #000;
}
.blocktools {
  position: absolute;
  left: 41px;
  top: 109px;
  display: flex;
  width: 145px;
  height: 52px;
  border: 1px solid #1e1e1e;
  border-radius: 2px;
  background: #fff;
}
.bt { display: flex; align-items: center; justify-content: center; }
.bt svg { width: 20px; height: 20px; }
.first { width: 49px; border-right: 1px solid #1e1e1e; }
.active { width: 46px; border: 1px solid #1e1e1e; border-radius: 2px; }
.last { width: 48px; padding-bottom: 3px; }
.last svg { width: 24px; height: 24px; }
.strava { width: 20px; height: 20px; }
.strava path { fill: none; stroke: #1e1e1e; stroke-width: 1.2; }

/* map */
.map { width: 610px; height: 407px; margin: 26px 0 0 41px; stroke-linejoin: round; stroke-linecap: round; }
.land { fill: #efe9e1; }
.pale { fill: #ebe9d3; }
.sand { fill: #e7dfba; }
.pink { fill: #efd9d3; }
.olive { fill: #d1e3ba; }
.park { fill: #b6e59e; }
.tarmac { fill: #d8dae6; }
.taxi { fill: none; stroke: #c9ccdd; stroke-width: 9; }
.runway { fill: none; stroke: #fff; stroke-width: 8; }
.water { fill: #75cff0; }
.creek { fill: none; stroke: #7fcfdc; stroke-width: 4; }
.street-case { fill: none; stroke: #d9dbea; stroke-width: 9.5; }
.street { fill: none; stroke: #fff; stroke-width: 5.5; }
.avenue { fill: none; stroke: #fff; stroke-width: 8; }
.road-case { fill: none; stroke: #fbf4ec; stroke-width: 15; }
.arterial { fill: none; stroke: #e6cd77; stroke-width: 10; }
.highway { fill: none; stroke: #e7ab82; stroke-width: 11; }
.ramps { fill: none; stroke: #e7ab82; stroke-width: 5; }
.route { fill: none; stroke: #f00; stroke-width: 7.5; }
.city { font: 500 70px Roboto, sans-serif; fill: #000; stroke: #fff; stroke-width: 5; paint-order: stroke; }
.campus { font: 400 42px Roboto, sans-serif; fill: #79680e; stroke: #fbf7e6; stroke-width: 4; paint-order: stroke; }
.hood { font: 400 40px Roboto, sans-serif; fill: #5f6b90; stroke: #f6f3ef; stroke-width: 5; paint-order: stroke; }
.shield .blue { fill: #6874a9; stroke: #fff; stroke-width: 3; }
.shield .red { fill: #bd6b6b; }
.shield text { font: 700 32px Roboto, sans-serif; fill: #fff; text-anchor: middle; }
.hwy7 rect { fill: #fff; stroke: #5f6880; stroke-width: 4; }
.hwy7 text { font: 500 34px Roboto, sans-serif; fill: #4d566e; }
.plane { fill: #4d65c4; }
.logo .ring { fill: #fff; fill-opacity: .85; stroke: #8e8e8e; stroke-width: 5; }
.logo .mark { fill: #8d8d8d; }
.logo .star { fill: #fff; }
.logo text { font: 700 61px "Open Sans", sans-serif; fill: #f4f2ee; stroke: #999; stroke-width: 7; paint-order: stroke; }
.credit rect { fill: #777; fill-opacity: .38; }
.credit text { font: 300 37px "Open Sans", sans-serif; fill: #333; }

/* scrollbar */
.scroll {
  display: flex;
  flex-direction: column;
  align-items: center;
  width: 14px;
  padding: 6px 1px 5px 0;
  background: #f1f1f1;
}
.scroll b { width: 11px; height: 376px; margin: 5px 0 auto 0; background: #c1c1c1; }
.scroll i { border: 4px solid transparent; }
.scroll .up { border-top: 0; border-bottom-color: #a3a3a3; }
.scroll .down { border-bottom: 0; border-top-color: #505050; }

/* settings panel */
.panel { width: 266px; border-left: 1px solid #e0e0e0; }
.tabs { display: flex; height: 47px; border-bottom: 1px solid #e0e0e0; font-weight: 500; line-height: 47px; }
.tabs span { padding: 0 15px; }
.tabs .on { height: 47px; padding: 0 15.5px; border-bottom: 2px solid #007cba; }
.tabs svg { width: 24px; height: 24px; margin: 11px 1px 0 auto; }
.card { display: flex; height: 83px; padding: 19px 18px 0; border-bottom: 1px solid #e0e0e0; }
.card strong { display: block; font-weight: 500; }
.card p { margin: 7px 0 0; }
.card div { margin-left: 14px; }
h2 {
  display: flex;
  align-items: center;
  justify-content: space-between;
  height: 48px;
  margin: 0;
  font-size: 13px;
  font-weight: 500;
}
h2 svg { width: 24px; height: 24px; margin-right: 1px; }
.advanced h2 svg { margin-top: -2px; }
.panel section { padding-left: 16px; }
.panel .options { height: 230px; border-bottom: 1px solid #e0e0e0; }
label { display: flex; align-items: center; height: 18px; margin-top: 4px; }
.second { margin-top: 24px; }
.toggle {
  width: 36px;
  height: 18px;
  margin-right: 12px;
  padding: 2px;
  border: 1px solid #1e1e1e;
  border-radius: 9px;
}
.toggle::before { content: ""; display: block; width: 12px; height: 12px; border-radius: 6px; background: #1e1e1e; }
.yes { border-color: #007cba; background: #007cba; }
.yes::before { margin-left: 18px; background: #fff; }
.options p { width: 220px; margin: 26px 0 14px; line-height: 18.5px; }
.units { display: flex; align-items: center; height: 24px; font-size: 11px; }
.units button { height: 24px; padding: 0 7px; border: 1px solid #1e1e1e; border-radius: 2px 0 0 2px; }
.units button + button { margin-left: -1px; border-radius: 0 2px 2px 0; }
.units span { margin-left: 8px; }

/* breadcrumb */
.crumbs { display: flex; align-items: center; height: 25px; padding-left: 26px; border-top: 1px solid #e0e0e0; }
.crumbs svg { width: 8px; height: 10px; margin: 0 12px; fill: none; stroke: #1e1e1e; stroke-width: 1.6; }
```
